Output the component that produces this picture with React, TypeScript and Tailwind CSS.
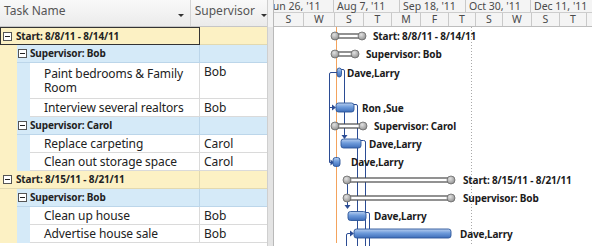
import React from "react";

type Row = {
  kind: "start" | "sup" | "task";
  name: string;
  sup?: string;
  tall?: boolean;
  selected?: boolean;
};

const rows: Row[] = [
  { kind: "start", name: "Start: 8/8/11 - 8/14/11", selected: true },
  { kind: "sup", name: "Supervisor: Bob" },
  { kind: "task", name: "Paint bedrooms & Family Room", sup: "Bob", tall: true },
  { kind: "task", name: "Interview several realtors", sup: "Bob" },
  { kind: "sup", name: "Supervisor: Carol" },
  { kind: "task", name: "Replace carpeting", sup: "Carol" },
  { kind: "task", name: "Clean out storage space", sup: "Carol" },
  { kind: "start", name: "Start: 8/15/11 - 8/21/11" },
  { kind: "sup", name: "Supervisor: Bob" },
  { kind: "task", name: "Clean up house", sup: "Bob" },
  { kind: "task", name: "Advertise house sale", sup: "Bob" },
];

const topTier = [
  { label: "Jun 26, '11", w: 60, cut: true },
  { label: "Aug 7, '11", w: 66 },
  { label: "Sep 18, '11", w: 66 },
  { label: "Oct 30, '11", w: 65 },
  { label: "Dec 11, '11", w: 66 },
];

const bottomTier = [
  { l: "S", w: 30 },
  { l: "W", w: 31 },
  { l: "S", w: 29 },
  { l: "T", w: 28 },
  { l: "M", w: 29 },
  { l: "F", w: 28 },
  { l: "T", w: 27 },
  { l: "S", w: 27 },
  { l: "W", w: 29 },
  { l: "S", w: 28 },
  { l: "T", w: 27 },
  { l: "", w: 20 },
];

function Toggle() {
  return (
    <span className="relative inline-block h-[9px] w-[9px] shrink-0 border border-[#555] bg-white">
      <span className="absolute left-[1px] right-[1px] top-[3px] h-px bg-[#222]" />
    </span>
  );
}

function Caret() {
  return <span className="mt-[11px] h-0 w-0 border-x-[3px] border-t-[3px] border-x-transparent border-t-[#333]" />;
}

function TableRow({ row }: { row: Row }) {
  if (row.kind === "start") {
    return (
      <div className="flex h-[18px] bg-[#fcf1c4]">
        <div
          className={
            row.selected
              ? "flex w-[200px] items-center gap-[4px] border border-[#333] pl-[2px] text-[10px] font-bold tracking-[-0.15px]"
              : "flex w-[200px] items-center gap-[4px] border-b border-r border-[#e2d9b0] pl-[3px] text-[10px] font-bold tracking-[-0.15px]"
          }
        >
          <Toggle />
          {row.name}
        </div>
        <div className="flex-1 border-b border-[#e2d9b0]" />
      </div>
    );
  }
  if (row.kind === "sup") {
    return (
      <div className="flex h-[18px]">
        <div className="w-[17px] bg-[#fcf1c4]" />
        <div className="flex w-[183px] items-center gap-[3px] border-b border-r border-[#bcd6ea] bg-[#d5eaf8] pl-[1px] text-[10px] font-bold tracking-[-0.15px]">
          <Toggle />
          {row.name}
        </div>
        <div className="flex-1 border-b border-[#bcd6ea] bg-[#d5eaf8]" />
      </div>
    );
  }
  return (
    <div className={row.tall ? "flex h-[36px]" : "flex h-[18px]"}>
      <div className="w-[17px] bg-[#fcf1c4]" />
      <div className="w-[13px] bg-[#d5eaf8]" />
      <div className="flex w-[170px] items-center border-b border-r border-[#dadada] pl-[14px] pr-[6px] text-[12px] leading-[14px] tracking-[-0.1px]">
        {row.name}
      </div>
      <div className="flex flex-1 items-start border-b border-[#dadada] pl-[4px] pt-[1px] text-[12px] leading-[15px]">
        {row.sup}
      </div>
    </div>
  );
}

function Summary({ x1, x2, cy, label, lx }: { x1: number; x2: number; cy: number; label: string; lx: number }) {
  return (
    <g>
      <rect x={x1} y={cy - 2} width={x2 - x1} height={4} fill="#fff" stroke="#4a4a4a" strokeWidth={1.2} />
      <circle cx={x1} cy={cy} r={4} fill="url(#knob)" stroke="#6a6a6a" strokeWidth={0.8} />
      <circle cx={x2} cy={cy} r={4} fill="url(#knob)" stroke="#6a6a6a" strokeWidth={0.8} />
      <text x={lx} y={cy} dominantBaseline="central" fontSize={10} fontWeight={700} letterSpacing={-0.15} fill="#1b1b1b">
        {label}
      </text>
    </g>
  );
}

function Task({ x1, x2, cy, label, lx }: { x1: number; x2: number; cy: number; label: string; lx: number }) {
  return (
    <g>
      <rect x={x1} y={cy - 4.5} width={x2 - x1} height={9} rx={2.5} fill="url(#bar)" stroke="#2d5699" strokeWidth={0.9} />
      <text x={lx} y={cy} dominantBaseline="central" fontSize={10} fontWeight={700} letterSpacing={-0.15} fill="#1b1b1b">
        {label}
      </text>
    </g>
  );
}

function GanttChart() {
  const line = "#2b4c94";
  return (
    <svg
      width={317}
      height={219}
      viewBox="275 27 317 219"
      className="block"
      style={{ fontFamily: "'Noto Sans', 'Open Sans', sans-serif" }}
    >
      <defs>
        <linearGradient id="bar" x1="0" y1="0" x2="0" y2="1">
          <stop offset="0" stopColor="#b9d0f0" />
          <stop offset="0.45" stopColor="#6e9bdb" />
          <stop offset="1" stopColor="#3d6cb8" />
        </linearGradient>
        <radialGradient id="knob" cx="0.4" cy="0.35" r="0.7">
          <stop offset="0" stopColor="#e2e2e2" />
          <stop offset="1" stopColor="#8c8c8c" />
        </radialGradient>
      </defs>

      <line x1={472.5} y1={27} x2={472.5} y2={246} stroke="#a9a9a9" strokeDasharray="1 2" />
      <line x1={337.5} y1={27} x2={337.5} y2={243} stroke="#f3a35d" strokeWidth={1} />

      {/* links */}
      <g fill="none" stroke={line} strokeWidth={1}>
        <path d="M338 72.5 H332 Q330.5 72.5 330.5 74 V162.5 H334" />
        <path d="M330.5 107.5 H335" />
        <path d="M342 69.5 H344 Q345.5 69.5 345.5 71 V136" />
        <path d="M355 104.5 H357 Q358.5 104.5 358.5 106 V246" />
        <path d="M362 140.5 H364.5 Q366.5 140.5 366.5 142 V246" />
        <path d="M348.5 184 V206" />
        <path d="M367 212.5 H369 Q370.5 212.5 370.5 214 V246" />
        <path d="M347.5 246 V235 Q347.5 233.5 349 233.5 H352" />
      </g>
      <g fill={line}>
        <path d="M337 107.5 L333 104.5 L333 110.5 Z" />
        <path d="M335 162.5 L331.5 159.5 L331.5 165.5 Z" />
        <path d="M345.5 139 L342.5 135 L348.5 135 Z" />
        <path d="M348.5 209 L345.5 205 L351.5 205 Z" />
        <path d="M355 233.5 L351 230.5 L351 236.5 Z" />
      </g>

      <Summary x1={336} x2={363} cy={36} label="Start: 8/8/11 - 8/14/11" lx={374} />
      <Summary x1={336} x2={356} cy={54} label="Supervisor: Bob" lx={367} />
      <Task x1={338} x2={342.5} cy={72.5} label="Dave,Larry" lx={348} />
      <Task x1={337} x2={355} cy={107.5} label="Ron ,Sue" lx={363} />
      <Summary x1={336} x2={364} cy={126} label="Supervisor: Carol" lx={375} />
      <Task x1={342} x2={362} cy={143.5} label="Dave,Larry" lx={370} />
      <Task x1={334} x2={341} cy={162} label="Dave,Larry" lx={352} />
      <Summary x1={348} x2={452} cy={180} label="Start: 8/15/11 - 8/21/11" lx={464} />
      <Summary x1={348} x2={452} cy={198} label="Supervisor: Bob" lx={464} />
      <Task x1={349} x2={367} cy={216} label="Dave,Larry" lx={375} />
      <Task x1={355} x2={452} cy={233.5} label="Dave,Larry" lx={461} />
    </svg>
  );
}

export default function App() {
  return (
    <div className="flex h-[246px] w-[592px] overflow-hidden bg-white font-['Noto_Sans','Open_Sans',sans-serif] text-[#222]">
      {/* sheet */}
      <div className="flex w-[268px] shrink-0 flex-col border-r border-[#cfcfcf]">
        <div className="flex h-[27px] border-b border-[#c6c6c6] bg-gradient-to-b from-[#f9f9f9] to-[#ebebeb] text-[12px] leading-[16px] text-[#555]">
          <div className="flex w-[200px] justify-between border-r border-[#d4d4d4] pl-[4px] pr-[6px] pt-[3px]">
            <span>Task Name</span>
            <Caret />
          </div>
          <div className="flex flex-1 gap-[6px] pl-[4px] pt-[3px]">
            <span>Supervisor</span>
            <Caret />
          </div>
        </div>
        {rows.map((r, i) => (
          <TableRow key={i} row={r} />
        ))}
      </div>

      {/* splitter */}
      <div className="flex w-[6px] shrink-0 flex-col border-r border-[#b9b9b9] bg-[#e4e4e4]">
        <div className="h-[27px] bg-[#f3f3f3]" />
      </div>

      {/* gantt */}
      <div className="flex min-w-0 flex-1 flex-col">
        <div className="flex h-[13px] shrink-0 border-b border-[#cdcdcd] bg-[#f4f4f4] text-[10.5px] leading-[12px] text-[#4a4a4a]">
          {topTier.map((t, i) => (
            <div
              key={i}
              style={{ width: t.w }}
              className={
                t.cut
                  ? "shrink-0 overflow-hidden whitespace-nowrap border-r border-[#c9c9c9] pl-[3px]"
                  : "shrink-0 whitespace-nowrap border-r border-[#c9c9c9] pl-[3px]"
              }
            >
              <span className={t.cut ? "ml-[-7px]" : ""}>{t.label}</span>
            </div>
          ))}
        </div>
        <div className="flex h-[14px] shrink-0 border-b border-[#bdbdbd] bg-[#f4f4f4] text-[10.5px] leading-[13px] text-[#4a4a4a]">
          {bottomTier.map((t, i) => (
            <div key={i} style={{ width: t.w }} className="shrink-0 border-r border-[#c9c9c9] text-center">
              {t.l}
            </div>
          ))}
        </div>
        <GanttChart />
      </div>
    </div>
  );
}
